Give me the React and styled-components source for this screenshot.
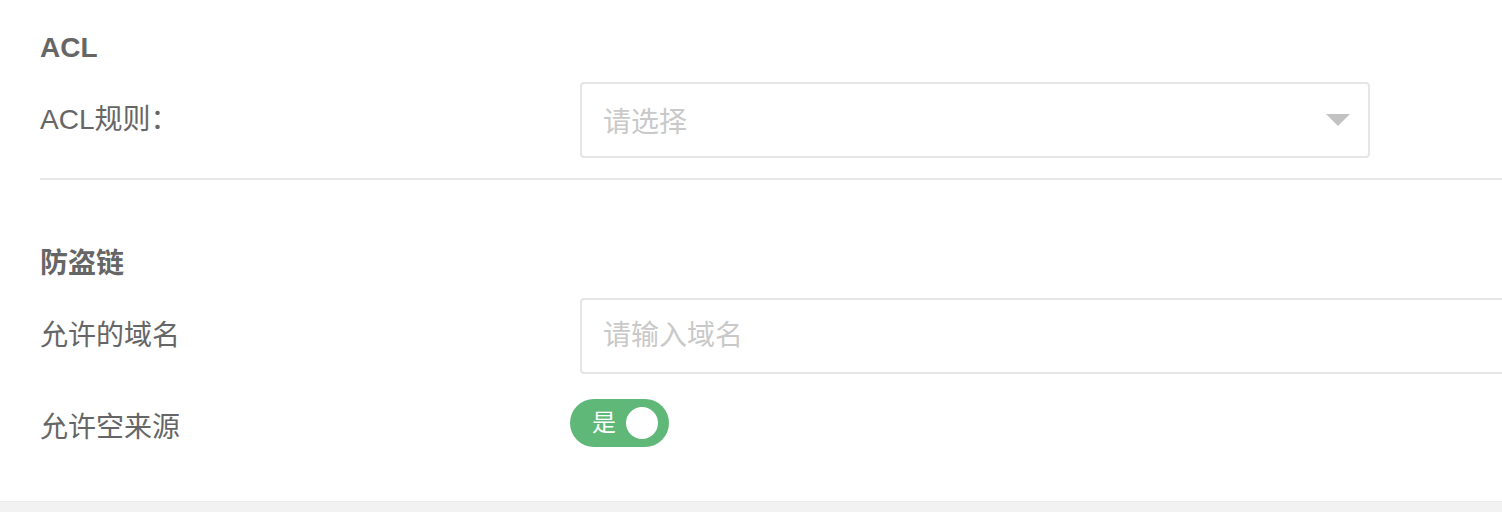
import React, { useState } from 'react';
import styled, { createGlobalStyle } from 'styled-components';

const GlobalStyle = createGlobalStyle`
  html, body {
    margin: 0;
    padding: 0;
    background: #f2f2f2;
    overflow: hidden;
  }
  body {
    font-family: "Liberation Sans", "Noto Sans CJK SC", sans-serif;
    color: #666;
  }
`;

const Panel = styled.div`
  background: #fff;
  padding: 28px 0 0 40px;
  height: 502px;
  box-sizing: border-box;
  border-bottom: 1px solid #ebebeb;
  overflow: hidden;
`;

const Section = styled.section`
  display: flex;
  flex-direction: column;
  gap: 14px;
`;

const Heading = styled.h3`
  margin: 0;
  font-size: 28px;
  line-height: 40px;
  height: 40px;
  font-weight: bold;
  color: #666;
`;

const Row = styled.div`
  display: flex;
  align-items: center;
  min-height: ${(p) => p.$height || 76}px;
  overflow: hidden;
`;

const Label = styled.label`
  flex: 0 0 540px;
  font-size: 28px;
  line-height: 40px;
  color: #666;
  margin-top: ${(p) => p.$shift || 0}px;
`;

const Divider = styled.hr`
  margin: 20px 0 64px;
  border: 0;
  height: 2px;
  background: #e8e8e8;
`;

const SelectBox = styled.div`
  box-sizing: border-box;
  width: 790px;
  height: 76px;
  border: 2px solid #e6e6e6;
  border-radius: 4px;
  display: flex;
  align-items: center;
  justify-content: space-between;
  padding: 0 18px 0 21px;
  cursor: pointer;
`;

const Placeholder = styled.span`
  font-size: 28px;
  color: #c9c9c9;
`;

const Caret = styled.span`
  width: 0;
  height: 0;
  border-top: 12px solid #c2c2c2;
  border-left: 12px solid transparent;
  border-right: 12px solid transparent;
`;

const TextInput = styled.input`
  box-sizing: border-box;
  flex: 0 0 1000px;
  height: 76px;
  border: 2px solid #e6e6e6;
  border-radius: 4px;
  padding: 0 21px;
  font-size: 28px;
  font-family: inherit;
  color: #666;
  outline: none;
  &::placeholder {
    color: #c9c9c9;
  }
`;

const Switch = styled.button`
  box-sizing: border-box;
  margin-left: -10px;
  width: 99px;
  height: 48px;
  border: 0;
  border-radius: 24px;
  background: ${(p) => (p.$on ? '#5fb878' : '#d2d2d2')};
  display: flex;
  align-items: center;
  flex-direction: ${(p) => (p.$on ? 'row' : 'row-reverse')};
  justify-content: space-between;
  padding: 0 11px 0 22px;
  cursor: pointer;
  font-family: inherit;
`;

const SwitchText = styled.span`
  color: #fff;
  font-size: 24px;
  line-height: 1;
`;

const Knob = styled.span`
  width: 32px;
  height: 32px;
  border-radius: 50%;
  background: #fff;
`;

const App = () => {
  const [allowEmpty, setAllowEmpty] = useState(true);

  return (
    <>
      <GlobalStyle />
      <Panel>
        <Section>
          <Heading>ACL</Heading>
          <Row>
            <Label>ACL规则：</Label>
            <SelectBox>
              <Placeholder>请选择</Placeholder>
              <Caret />
            </SelectBox>
          </Row>
        </Section>
        <Divider />
        <Section>
          <Heading>防盗链</Heading>
          <Row>
            <Label>允许的域名</Label>
            <TextInput placeholder="请输入域名" />
          </Row>
          <Row $height={70}>
            <Label $shift={10}>允许空来源</Label>
            <Switch $on={allowEmpty} onClick={() => setAllowEmpty(!allowEmpty)}>
              <SwitchText>{allowEmpty ? '是' : '否'}</SwitchText>
              <Knob />
            </Switch>
          </Row>
        </Section>
      </Panel>
    </>
  );
};

export default App;
